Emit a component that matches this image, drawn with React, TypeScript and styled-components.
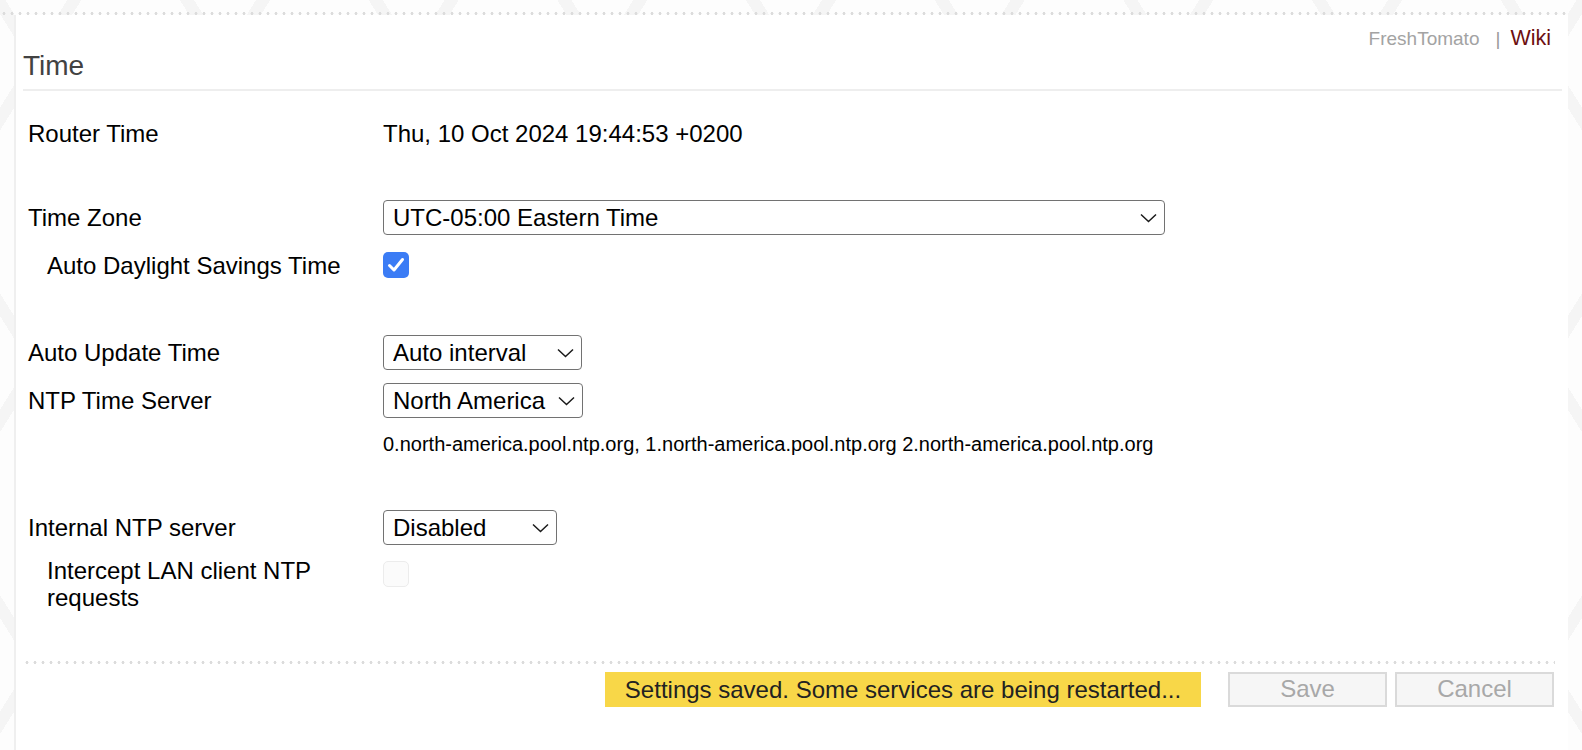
import React from "react";
import styled, { createGlobalStyle } from "styled-components";

const GlobalStyle = createGlobalStyle`
  html, body {
    margin: 0;
    padding: 0;
  }
  body {
    width: 1582px;
    height: 750px;
    overflow: hidden;
    font-family: "Liberation Sans", Arial, Helvetica, sans-serif;
    color: #000;
    background-color: #fdfdfd;
    background-image:
      repeating-linear-gradient(58deg, transparent 0 70px, #f5f5f5 70px 82px, transparent 82px 160px),
      repeating-linear-gradient(-58deg, transparent 0 70px, #f5f5f5 70px 82px, transparent 82px 160px);
  }
`;

const Page = styled.div`
  display: flex;
  flex-direction: column;
  width: 1582px;
  height: 750px;
`;

const TopGap = styled.div`
  height: 12px;
`;

const Dotted = styled.div<{ $width: number }>`
  height: 3px;
  width: ${(p) => p.$width}px;
  background-image: radial-gradient(circle, #dcdcdc 1.3px, transparent 1.7px);
  background-size: 8px 3px;
  background-repeat: repeat-x;
`;

const Panel = styled.div`
  flex: 1;
  box-sizing: border-box;
  margin-left: 14px;
  width: 1554px;
  background: #fff;
  border-left: 2px solid #efefef;
  padding-left: 7px;
  padding-right: 6px;
  display: flex;
  flex-direction: column;
`;

const TopLinks = styled.div`
  margin-top: 12px;
  padding-right: 11px;
  text-align: right;
  font-size: 19px;
  line-height: 23px;
  color: #a3a3a3;
`;

const Sep = styled.span`
  margin: 0 10px 0 16px;
  color: #9a9a9a;
`;

const WikiLink = styled.a`
  color: #6d0f10;
  font-size: 21.5px;
  text-decoration: none;
`;

const SectionTitle = styled.h2`
  margin: 0;
  font-size: 28px;
  line-height: 32px;
  font-weight: normal;
  color: #424242;
  padding-bottom: 7px;
  border-bottom: 2px solid #eeeeee;
`;

const Fields = styled.div`
  padding-left: 5px;
  margin-top: 18px;
  display: flex;
  flex-direction: column;
`;

const Row = styled.div<{ $top?: boolean; $h?: number }>`
  display: grid;
  grid-template-columns: 355px 1fr;
  align-items: ${(p) => (p.$top ? "start" : "center")};
  min-height: ${(p) => p.$h ?? 48}px;
`;

const Spacer = styled.div<{ $h: number }>`
  height: ${(p) => p.$h}px;
`;

const Label = styled.div<{ $indent?: boolean; $top?: boolean }>`
  font-size: 24px;
  line-height: 27px;
  padding-left: ${(p) => (p.$indent ? 19 : 0)}px;
  padding-right: 12px;
  padding-top: ${(p) => (p.$top ? 5.5 : 0)}px;
`;

const Value = styled.div`
  font-size: 24px;
  line-height: 27px;
`;

const SmallNote = styled.div`
  font-size: 20px;
  line-height: 24px;
`;

const SelectWrap = styled.div<{ $w: number }>`
  position: relative;
  width: ${(p) => p.$w}px;
  height: 35px;
`;

const Select = styled.select`
  appearance: none;
  -webkit-appearance: none;
  width: 100%;
  height: 100%;
  box-sizing: border-box;
  border: 1.5px solid #727272;
  border-radius: 4px;
  background: #fff;
  font-family: "Liberation Sans", Arial, Helvetica, sans-serif;
  font-size: 24px;
  color: #000;
  padding: 0 34px 0 9px;
  margin: 0;
  outline: none;
`;

const Chevron = styled.svg`
  position: absolute;
  right: 8px;
  top: 13px;
  width: 17px;
  height: 10px;
  pointer-events: none;
`;

const Check = styled.span<{ $checked?: boolean; $top?: number }>`
  display: inline-flex;
  align-items: center;
  justify-content: center;
  width: 26px;
  height: 26px;
  box-sizing: border-box;
  margin-top: ${(p) => p.$top ?? 0}px;
  border-radius: 5px;
  background: ${(p) => (p.$checked ? "#3b7cf5" : "#fbfbfb")};
  border: ${(p) => (p.$checked ? "none" : "1.5px solid #ececec")};
`;

const Footer = styled.div`
  margin-top: 50px;
  display: flex;
  flex-direction: column;
`;

const ButtonBar = styled.div`
  margin-top: 8px;
  display: flex;
  justify-content: flex-end;
  align-items: center;
  padding-right: 8px;
`;

const Notice = styled.div`
  width: 596px;
  height: 35px;
  box-sizing: border-box;
  background: #f8d748;
  color: #222;
  font-size: 24px;
  line-height: 35px;
  text-align: center;
  margin-right: 27px;
`;

const Button = styled.button<{ $gap?: number }>`
  width: 159px;
  height: 35px;
  box-sizing: border-box;
  background: #f6f6f6;
  border: 2px solid #dadada;
  color: #a8a8a8;
  font-family: "Liberation Sans", Arial, Helvetica, sans-serif;
  font-size: 24px;
  padding: 0;
  margin-left: ${(p) => p.$gap ?? 0}px;
`;

const DropDown: React.FC<{ w: number; value: string }> = ({ w, value }) => (
  <SelectWrap $w={w}>
    <Select defaultValue={value}>
      <option>{value}</option>
    </Select>
    <Chevron viewBox="0 0 17 10">
      <polyline points="1,1.5 8.5,8.5 16,1.5" fill="none" stroke="#1a1a1a" strokeWidth="1.5" />
    </Chevron>
  </SelectWrap>
);

export default function App() {
  return (
    <>
      <GlobalStyle />
      <Page>
        <TopGap />
        <Dotted $width={1568} />
        <Panel>
          <TopLinks>
            FreshTomato<Sep>|</Sep>
            <WikiLink href="#">Wiki</WikiLink>
          </TopLinks>
          <SectionTitle>Time</SectionTitle>
          <Fields>
            <Row>
              <Label>Router Time</Label>
              <Value>Thu, 10 Oct 2024 19:44:53 +0200</Value>
            </Row>
            <Spacer $h={36} />
            <Row>
              <Label>Time Zone</Label>
              <DropDown w={782} value="UTC-05:00 Eastern Time" />
            </Row>
            <Row>
              <Label $indent>Auto Daylight Savings Time</Label>
              <div>
                <Check $checked>
                  <svg width="18" height="16" viewBox="0 0 18 16">
                    <polyline points="2.5,8.5 7,13 15.5,2.5" fill="none" stroke="#fff" strokeWidth="3" strokeLinecap="round" strokeLinejoin="round" />
                  </svg>
                </Check>
              </div>
            </Row>
            <Spacer $h={39} />
            <Row>
              <Label>Auto Update Time</Label>
              <DropDown w={199} value="Auto interval" />
            </Row>
            <Row>
              <Label>NTP Time Server</Label>
              <DropDown w={200} value="North America" />
            </Row>
            <Row $h={40}>
              <span />
              <SmallNote>
                0.north-america.pool.ntp.org, 1.north-america.pool.ntp.org 2.north-america.pool.ntp.org
              </SmallNote>
            </Row>
            <Spacer $h={39} />
            <Row>
              <Label>Internal NTP server</Label>
              <DropDown w={174} value="Disabled" />
            </Row>
            <Row $top>
              <Label $indent $top>Intercept LAN client NTP requests</Label>
              <div>
                <Check $top={10} />
              </div>
            </Row>
          </Fields>
          <Footer>
            <Dotted $width={1532} />
            <ButtonBar>
              <Notice>Settings saved. Some services are being restarted...</Notice>
              <Button disabled>Save</Button>
              <Button disabled $gap={8}>Cancel</Button>
            </ButtonBar>
          </Footer>
        </Panel>
      </Page>
    </>
  );
}
